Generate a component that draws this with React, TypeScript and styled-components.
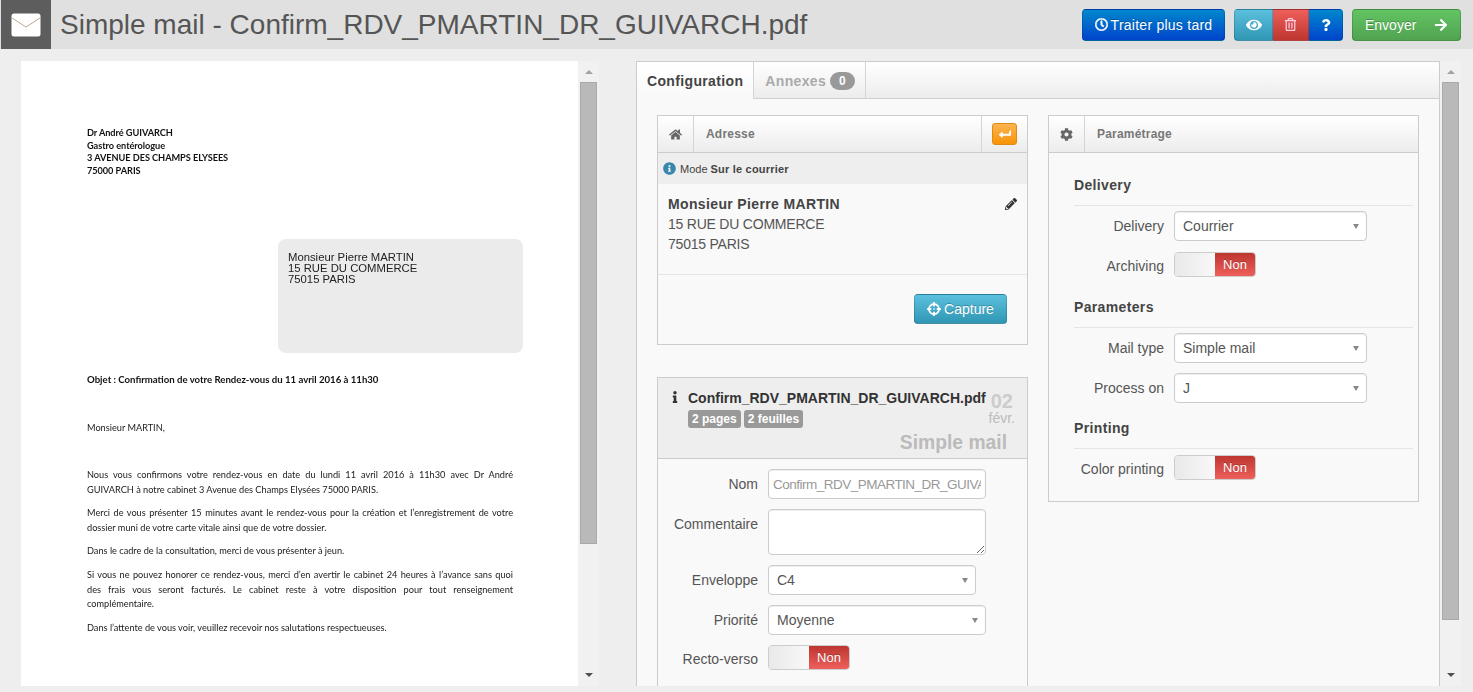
import React from "react";
import styled, { createGlobalStyle } from "styled-components";
import {
  FaRegClock, FaEye, FaRegTrashAlt, FaQuestion, FaArrowRight, FaHome, FaCog,
  FaLevelDownAlt, FaPencilAlt, FaInfoCircle, FaInfo, FaCrosshairs,
} from "react-icons/fa";

const Global = createGlobalStyle`
  html, body { margin: 0; padding: 0; height: 100%; overflow: hidden; background: #eeeeee; }
  body { font-family: "Liberation Sans", Arial, sans-serif; font-size: 14px; color: #555; }
  * { box-sizing: border-box; }
`;

const Page = styled.div`height: 692px; width: 1473px; overflow: hidden; display: flex; flex-direction: column;`;

const Header = styled.header`height: 49px; background: #e0e0e0; display: flex; align-items: center; flex: none; padding: 0 12px 0 1px;`;
const LogoBox = styled.div`width: 50px; height: 49px; background: #5d5d5d; display: flex; align-items: center; justify-content: center; flex: none;`;
const Title = styled.h1`margin: 0 0 0 9px; font-weight: 400; font-size: 28px; line-height: 49px; color: #555; flex: 1; white-space: nowrap;`;

const gradients = {
  primary: "linear-gradient(#0088cc, #0044cc)",
  info: "linear-gradient(#5bc0de, #2f96b4)",
  danger: "linear-gradient(#ee5f5b, #bd362f)",
  success: "linear-gradient(#62c462, #51a351)",
  warning: "linear-gradient(#fbb450, #f89406)",
};
type Tone = keyof typeof gradients;

const Btn = styled.button<{ $tone: Tone; $w: number }>`
  width: ${(p) => p.$w}px; height: 32px; border: 1px solid rgba(0,0,0,.15); border-bottom-color: rgba(0,0,0,.25);
  border-radius: 4px; background: ${(p) => gradients[p.$tone]}; color: #fff; font: 14px "Liberation Sans", Arial, sans-serif;
  display: flex; align-items: center; justify-content: center; padding: 0; gap: 4px;
  text-shadow: 0 -1px 0 rgba(0,0,0,.25); flex: none;
`;
const LaterBtn = styled(Btn)`letter-spacing: .25px; gap: 3px;`;
const SendBtn = styled(Btn)`justify-content: space-between; padding: 0 12px; margin-left: 9px;`;
const BtnGroup = styled.div`display: flex; margin-left: 9px; flex: none;`;
const GroupBtn = styled(Btn)<{ $pos?: "first" | "last" }>`
  border-radius: ${(p) => (p.$pos === "first" ? "4px 0 0 4px" : p.$pos === "last" ? "0 4px 4px 0" : "0")};
  border-left-width: ${(p) => (p.$pos === "first" ? 1 : 0)}px;
`;

const Main = styled.main`flex: none; height: 625px; margin-top: 12px; display: flex; overflow: hidden;`;

const DocPane = styled.section`width: 557px; margin-left: 21px; background: #fff; overflow: hidden; flex: none; padding: 66px 66px 0; color: #1a1a1a; font-family: Lato, sans-serif; font-size: 9.2px; filter: blur(0.25px);`;
const Letterhead = styled.div`font-weight: 700; line-height: 12.6px; color: #111; font-size: 9.2px; letter-spacing: -.05px;`;
const AddressWindow = styled.div`margin: 62px 0 0 191px; width: 245px; height: 114px; background: #ebebeb; border-radius: 8px; padding: 13px 10px; font: 11.3px/11px "Liberation Sans", Arial, sans-serif; color: #222;`;
const Subject = styled.div`margin-top: 21px; font-weight: 700; line-height: 12.6px; color: #111; font-size: 9.6px;`;
const Greeting = styled.div`margin-top: 35px; line-height: 12.6px;`;
const LetterBody = styled.div`margin-top: 33.5px; width: 426px;`;
const Para = styled.div`margin-bottom: 8.8px;`;
const Line = styled.div<{ $just?: boolean }>`
  line-height: 14.7px; white-space: nowrap;
  ${(p) => (p.$just ? "white-space: normal; text-align: justify; text-align-last: justify;" : "")}
`;

const Scrollbar = styled.div`width: 21px; flex: none; background: #f1f1f1; display: flex; flex-direction: column; align-items: center; padding-top: 9px; position: relative;`;
const ArrowUp = styled.div`width: 0; height: 0; border: 4px solid transparent; border-top: 0; border-bottom: 4px solid #a3a3a3;`;
const ArrowDown = styled.div`width: 0; height: 0; border: 4px solid transparent; border-bottom: 0; border-top: 4px solid #505050; position: absolute; bottom: 9px;`;
const Thumb = styled.div<{ $h: number }>`width: 17px; height: ${(p) => p.$h}px; margin-top: 8px; background: #b9b9b9; border: 1px solid #a9a9a9;`;

const RightPane = styled.section`margin-left: 37px; width: 804px; flex: none; border: 1px solid #ccc; border-bottom: 0; background: #f9f9f9; overflow: hidden;`;
const TabBar = styled.div`height: 37px; display: flex; background: linear-gradient(#ffffff, #ececec); border-bottom: 1px solid #cfcfcf;`;
const Tab = styled.div<{ $active?: boolean }>`
  height: ${(p) => (p.$active ? 37 : 36)}px; padding: ${(p) => (p.$active ? "0 10px" : "1px 10px 0 11px")}; display: flex; align-items: center; gap: 4px; font-weight: 700; font-size: 14px;
  letter-spacing: .35px;
  border-right: 1px solid #d4d4d4; color: ${(p) => (p.$active ? "#444" : "#aaa")};
  background: ${(p) => (p.$active ? "linear-gradient(#ffffff, #f9f9f9)" : "transparent")};
  position: relative;
`;
const CountBadge = styled.span`width: 25px; height: 18px; border-radius: 9px; background: #999; color: #fff; font-size: 12px; display: flex; align-items: center; justify-content: center;`;

const Columns = styled.div`display: flex; gap: 20px; padding: 16px 20px 0; align-items: flex-start;`;
const Column = styled.div`width: 371px; flex: none; display: flex; flex-direction: column; gap: 32px;`;
const Panel = styled.div`border: 1px solid #ccc; background: #f9f9f9;`;
const PanelHead = styled.div`height: 37px; display: flex; align-items: stretch; background: linear-gradient(#ffffff, #ececec); border-bottom: 1px solid #ccc;`;
const HeadIcon = styled.div`width: 36px; flex: none; border-right: 1px solid #d4d4d4; display: flex; align-items: center; justify-content: center; color: #666; font-size: 13px;`;
const HeadTitle = styled.div`flex: 1; padding-left: 12px; font-size: 12px; font-weight: 700; color: #777; display: flex; align-items: center; letter-spacing: .2px;`;
const HeadAction = styled.div`width: 46px; flex: none; border-left: 1px solid #d4d4d4; display: flex; align-items: center; justify-content: center;`;
const MiniBtn = styled.div`width: 25px; height: 22px; border-radius: 3px; border: 1px solid #e08a10; background: ${gradients.warning}; color: #fff; display: flex; align-items: center; justify-content: center; font-size: 12px;`;

const ModeStrip = styled.div`height: 31px; background: #eeeeee; display: flex; align-items: center; padding-left: 5px; font-size: 11px; color: #444; gap: 4px;`;
const Strong = styled.strong`font-weight: 700; letter-spacing: .2px;`;
const InfoDot = styled.span`color: #3a87ad; font-size: 13px; display: flex;`;
const AddressBody = styled.div`height: 91px; padding: 10px 10px 0; border-bottom: 1px solid #e5e5e5; position: relative; line-height: 20px; color: #555; letter-spacing: -.22px;`;
const AddressName = styled.div`font-weight: 700; color: #444; letter-spacing: .36px;`;
const EditIcon = styled.span`position: absolute; top: 14px; right: 10px; color: #333; font-size: 12px; display: flex;`;
const PanelFoot = styled.div`height: 69px; padding: 19px 20px 0 0; display: flex; justify-content: flex-end; align-items: flex-start;`;
const CaptureBtn = styled(Btn)`height: 30px; gap: 3px;`;

const FileHead = styled.div`height: 81px; background: #eeeeee; border-bottom: 1px solid #ccc; display: flex; padding: 10px 0 0 11px; position: relative;`;
const FileIcon = styled.div`width: 19px; flex: none; color: #333; font-size: 12px; padding-top: 3px;`;
const FileInfo = styled.div`flex: 1;`;
const FileName = styled.div`font-weight: 700; color: #333; line-height: 20px;`;
const Badges = styled.div`display: flex; gap: 3px; margin-top: 2px;`;
const Tag = styled.span`height: 18px; padding: 0 4px; border-radius: 3px; background: #999; color: #fff; font-size: 12px; font-weight: 700; display: flex; align-items: center;`;
const DateBox = styled.div`position: absolute; top: 13px; right: 12px; text-align: center; color: #bbb; line-height: 1;`;
const DateDay = styled.div`font-size: 20px; font-weight: 700; color: #ccc; line-height: 21px;`;
const DateMonth = styled.div`font-size: 14px; line-height: 12px;`;
const FileType = styled.div`position: absolute; right: 20px; bottom: 4px; font-size: 19.3px; font-weight: 700; color: #bbb;`;

const Form = styled.div<{ $labelW: number }>`--lw: ${(p) => p.$labelW}px;`;
const FileForm = styled(Form)`padding-top: 10px; height: 227px;`;
const SettingsBody = styled(Form)`padding: 22px 5px 18px 25px;`;
const Legend = styled.div<{ $gap: number; $after: number }>`
  font-weight: 700; color: #444; line-height: 20px; padding-bottom: 10px; border-bottom: 1px solid #e5e5e5; letter-spacing: .35px;
  margin-bottom: ${(p) => p.$after}px; margin-top: ${(p) => p.$gap}px;
`;
const Row = styled.div<{ $gap?: number }>`display: flex; align-items: flex-start; gap: 10px; margin-bottom: ${(p) => p.$gap ?? 10}px;`;
const Label = styled.label`width: var(--lw); flex: none; text-align: right; line-height: 30px; color: #555;`;
const fieldBase = `
  border: 1px solid #ccc; border-radius: 4px; background: #fff; font: 14px "Liberation Sans", Arial, sans-serif; color: #555;
  box-shadow: inset 0 1px 1px rgba(0,0,0,.075);
`;
const TextInput = styled.input<{ $w: number }>`${fieldBase} width: ${(p) => p.$w}px; height: 30px; padding: 0 4px; color: #999; outline: 0; font-size: 13.5px; letter-spacing: -.51px;`;
const TextArea = styled.textarea<{ $w: number }>`${fieldBase} width: ${(p) => p.$w}px; height: 46px; padding: 4px; display: block; outline: 0; resize: vertical;`;
const Select = styled.div<{ $w: number }>`${fieldBase} width: ${(p) => p.$w}px; height: 30px; padding: 0 7px 0 8px; display: flex; align-items: center; justify-content: space-between;`;
const Caret = styled.span`width: 0; height: 0; border: 3.5px solid transparent; border-bottom: 0; border-top: 5px solid #888;`;
const Toggle = styled.div`width: 82px; height: 25px; border: 1px solid #ccc; border-radius: 4px; overflow: hidden; display: flex; flex: none;`;
const ToggleKnob = styled.span`flex: 1; background: linear-gradient(to right, #e9e9e9, #f8f8f8);`;
const ToggleOff = styled.span`width: 40px; background: linear-gradient(#bd362f, #ee5f5b); color: #fff; font-size: 13px; display: flex; align-items: center; justify-content: center; text-shadow: 0 -1px 0 rgba(0,0,0,.25);`;
const ToggleLabel = styled(Label)`line-height: 28px;`;

const NonToggle = () => (
  <Toggle><ToggleKnob /><ToggleOff>Non</ToggleOff></Toggle>
);
const Choice = ({ w, children }: { w: number; children: React.ReactNode }) => (
  <Select $w={w}><span>{children}</span><Caret /></Select>
);

const Envelope = () => (
  <svg width="30" height="24" viewBox="0 0 30 24">
    <rect x="0.5" y="0.5" width="29" height="23" rx="2.5" fill="#fff" />
    <path d="M1 5 L15 14 L29 5" fill="none" stroke="#b9a98c" strokeWidth="1" />
  </svg>
);

export default function App() {
  return (
    <Page>
      <Global />
      <Header>
        <LogoBox><Envelope /></LogoBox>
        <Title>Simple mail - Confirm_RDV_PMARTIN_DR_GUIVARCH.pdf</Title>
        <LaterBtn $tone="primary" $w={143}><FaRegClock size={13} strokeWidth={20} /> Traiter plus tard</LaterBtn>
        <BtnGroup>
          <GroupBtn $tone="info" $w={39} $pos="first"><FaEye size={16} /></GroupBtn>
          <GroupBtn $tone="danger" $w={36}><FaRegTrashAlt size={13} color="#ffd0e8" /></GroupBtn>
          <GroupBtn $tone="primary" $w={34} $pos="last"><FaQuestion size={12} /></GroupBtn>
        </BtnGroup>
        <SendBtn $tone="success" $w={109}>Envoyer <FaArrowRight size={14} /></SendBtn>
      </Header>
      <Main>
        <DocPane>
          <Letterhead>
            <div>Dr André GUIVARCH</div>
            <div>Gastro entérologue</div>
            <div>3 AVENUE DES CHAMPS ELYSEES</div>
            <div>75000 PARIS</div>
          </Letterhead>
          <AddressWindow>
            <div>Monsieur Pierre MARTIN</div>
            <div>15 RUE DU COMMERCE</div>
            <div>75015 PARIS</div>
          </AddressWindow>
          <Subject>Objet : Confirmation de votre Rendez-vous du 11 avril 2016 à 11h30</Subject>
          <Greeting>Monsieur MARTIN,</Greeting>
          <LetterBody>
            <Para>
              <Line $just>Nous vous confirmons votre rendez-vous en date du lundi 11 avril 2016 à 11h30 avec Dr André</Line>
              <Line>GUIVARCH à notre cabinet 3 Avenue des Champs Elysées 75000 PARIS.</Line>
            </Para>
            <Para>
              <Line $just>Merci de vous présenter 15 minutes avant le rendez-vous pour la création et l’enregistrement de votre</Line>
              <Line>dossier muni de votre carte vitale ainsi que de votre dossier.</Line>
            </Para>
            <Para><Line>Dans le cadre de la consultation, merci de vous présenter à jeun.</Line></Para>
            <Para>
              <Line $just>Si vous ne pouvez honorer ce rendez-vous, merci d’en avertir le cabinet 24 heures à l’avance sans quoi</Line>
              <Line $just>des frais vous seront facturés. Le cabinet reste à votre disposition pour tout renseignement</Line>
              <Line>complémentaire.</Line>
            </Para>
            <Para><Line>Dans l’attente de vous voir, veuillez recevoir nos salutations respectueuses.</Line></Para>
          </LetterBody>
        </DocPane>
        <Scrollbar><ArrowUp /><Thumb $h={462} /><ArrowDown /></Scrollbar>
        <RightPane>
          <TabBar>
            <Tab $active>Configuration</Tab>
            <Tab>Annexes <CountBadge>0</CountBadge></Tab>
          </TabBar>
          <Columns>
            <Column>
              <Panel>
                <PanelHead>
                  <HeadIcon><FaHome /></HeadIcon>
                  <HeadTitle>Adresse</HeadTitle>
                  <HeadAction><MiniBtn><FaLevelDownAlt style={{ transform: "rotate(90deg)" }} /></MiniBtn></HeadAction>
                </PanelHead>
                <ModeStrip>
                  <InfoDot><FaInfoCircle /></InfoDot>
                  <span>Mode <Strong>Sur le courrier</Strong></span>
                </ModeStrip>
                <AddressBody>
                  <AddressName>Monsieur Pierre MARTIN</AddressName>
                  <div>15 RUE DU COMMERCE</div>
                  <div>75015 PARIS</div>
                  <EditIcon><FaPencilAlt /></EditIcon>
                </AddressBody>
                <PanelFoot>
                  <CaptureBtn $tone="info" $w={93}><FaCrosshairs size={14} /> Capture</CaptureBtn>
                </PanelFoot>
              </Panel>
              <Panel>
                <FileHead>
                  <FileIcon><FaInfo /></FileIcon>
                  <FileInfo>
                    <FileName>Confirm_RDV_PMARTIN_DR_GUIVARCH.pdf</FileName>
                    <Badges><Tag>2 pages</Tag><Tag>2 feuilles</Tag></Badges>
                  </FileInfo>
                  <DateBox><DateDay>02</DateDay><DateMonth>févr.</DateMonth></DateBox>
                  <FileType>Simple mail</FileType>
                </FileHead>
                <FileForm $labelW={100}>
                  <Row>
                    <Label>Nom</Label>
                    <TextInput $w={218} readOnly defaultValue="Confirm_RDV_PMARTIN_DR_GUIVARCH.pdf" />
                  </Row>
                  <Row>
                    <Label>Commentaire</Label>
                    <TextArea $w={218} />
                  </Row>
                  <Row>
                    <Label>Enveloppe</Label>
                    <Choice w={208}>C4</Choice>
                  </Row>
                  <Row>
                    <Label>Priorité</Label>
                    <Choice w={218}>Moyenne</Choice>
                  </Row>
                  <Row>
                    <ToggleLabel>Recto-verso</ToggleLabel>
                    <NonToggle />
                  </Row>
                </FileForm>
              </Panel>
            </Column>
            <Column>
              <Panel>
                <PanelHead>
                  <HeadIcon><FaCog /></HeadIcon>
                  <HeadTitle>Paramétrage</HeadTitle>
                </PanelHead>
                <SettingsBody $labelW={90}>
                  <Legend $gap={0} $after={5}>Delivery</Legend>
                  <Row $gap={11}><Label>Delivery</Label><Choice w={193}>Courrier</Choice></Row>
                  <Row $gap={0}><ToggleLabel>Archiving</ToggleLabel><NonToggle /></Row>
                  <Legend $gap={17} $after={5}>Parameters</Legend>
                  <Row><Label>Mail type</Label><Choice w={193}>Simple mail</Choice></Row>
                  <Row $gap={0}><Label>Process on</Label><Choice w={193}>J</Choice></Row>
                  <Legend $gap={15} $after={6}>Printing</Legend>
                  <Row $gap={0}><ToggleLabel>Color printing</ToggleLabel><NonToggle /></Row>
                </SettingsBody>
              </Panel>
            </Column>
          </Columns>
        </RightPane>
        <Scrollbar><ArrowUp /><Thumb $h={538} /><ArrowDown /></Scrollbar>
      </Main>
    </Page>
  );
}
